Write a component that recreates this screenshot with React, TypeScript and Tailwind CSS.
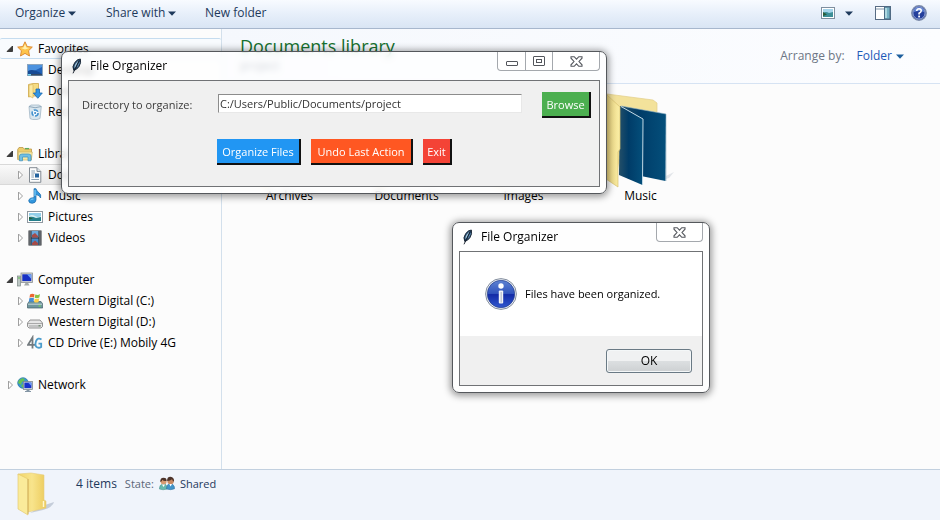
import type { ReactNode } from "react";

const Caret = ({ className }: { className: string }) => (
  <svg width="8" height="5" viewBox="0 0 8 5" className={className} aria-hidden="true">
    <path d="M0 0.5H8L4 4.8Z" fill="currentColor" />
  </svg>
);

const Expander = ({ open }: { open: boolean }) => (
  <svg width="8" height="10" viewBox="0 0 8 10" className="shrink-0" aria-hidden="true">
    {open ? (
      <path d="M6.5 2V7.5H1Z" fill="#3c3c3c" stroke="#262626" strokeWidth="0.8" />
    ) : (
      <path d="M2.5 1L6.5 5L2.5 9Z" fill="#fff" stroke="#a0a0a0" />
    )}
  </svg>
);

const Svg16 = ({ children }: { children: ReactNode }) => (
  <svg width="16" height="16" viewBox="0 0 16 16" className="shrink-0" aria-hidden="true">
    {children}
  </svg>
);

const StarIcon = () => (
  <Svg16>
    <path d="M8 .8L10.2 5.5L15.3 6.1L11.6 9.7L12.5 15L8 12.4L3.5 15L4.4 9.7L.7 6.1L5.8 5.5Z" fill="#fdc44b" stroke="#d9822b" strokeWidth="0.9" strokeLinejoin="round" />
    <path d="M8 3L9.4 6.4L12.5 7L8 8.5L4 7L6.5 6.4Z" fill="#fff0b0" />
  </Svg16>
);

const DesktopIcon = () => (
  <Svg16>
    <rect x=".5" y="2.5" width="15" height="11" fill="#2263b8" stroke="#8ba4bd" />
    <path d="M1 3H15V5L1 12Z" fill="#4c92df" />
    <path d="M1 13V9Q6 6 15 12V13Z" fill="#174b94" />
    <rect x="1" y="12" width="14" height="1.5" fill="#354b65" />
    <rect x="1" y="12" width="3" height="1.5" fill="#74d1ef" />
  </Svg16>
);

const DownloadsIcon = () => (
  <Svg16>
    <path d="M1.5 1.5L6 .5H11.5V13H6L1.5 14Z" fill="#f5dc83" stroke="#cda74a" strokeWidth="0.8" />
    <path d="M6 1.5V15L2 13V2Z" fill="#fbeaa3" stroke="#d6b458" strokeWidth="0.6" />
    <path d="M9 6H12.5V10H15.3L10.8 15.3L6.3 10H9Z" fill="#3295e4" stroke="#1a68af" strokeWidth="0.8" />
  </Svg16>
);

const RecentIcon = () => (
  <Svg16>
    <path d="M2 2.5L4 1L12 1L14.3 2.5L13 14.5L10 15.5H5.5L3 14.5Z" fill="#d9e6ee" stroke="#a3b7c6" strokeWidth="0.8" />
    <path d="M2 2.5Q8 5 14.3 2.5" fill="none" stroke="#90a8ba" />
    <circle cx="8.1" cy="9" r="3" fill="#f5fbff" stroke="#4392cf" strokeWidth="1.6" strokeDasharray="4.7 1.5" />
    <circle cx="8.1" cy="9" r="1" fill="#3b83c4" />
  </Svg16>
);

const LibrariesIcon = () => (
  <Svg16>
    <path d="M.7 3.5L2 1.5H6L7.4 3H14.5V13.5H.7Z" fill="#edcd6c" stroke="#bd9747" strokeWidth="0.8" />
    <path d="M1.2 6H15.3L14.3 14H1.5Z" fill="#faeaa5" stroke="#c9b165" strokeWidth="0.7" />
    <path d="M8 2.6H12" stroke="#5caa5c" strokeWidth="1.3" />
    <path d="M2.5 14.8V10Q2.5 8 5 8H11.5Q14 8 14 10V14.8H11V11H5.5V14.8Z" fill="#72bfe4" stroke="#398fbd" strokeWidth="0.7" />
  </Svg16>
);

const DocumentIcon = () => (
  <Svg16>
    <path d="M2.5 .7H10L13.8 4.5V15.3H2.5Z" fill="#fdfdfd" stroke="#838b93" />
    <path d="M10 .7V4.5H13.8" fill="#dce4ea" stroke="#838b93" />
    <path d="M4.3 4H8M4.3 6H8M4.3 8H7M4.3 10H7M4.3 12.5H12" stroke="#8da2b5" />
    <rect x="8" y="6.5" width="4" height="4" fill="#26649f" />
  </Svg16>
);

const MusicIcon = () => (
  <Svg16>
    <path d="M7 .7H9Q9.5 3 12 4.8Q14.5 6.5 13.6 10Q12.8 7.3 9 6.5V12Q8.8 15.1 5.2 15.3Q1.8 15.3 1.7 12.8Q2 9.7 7 9.7Z" fill="#3296dd" stroke="#1767a7" strokeWidth="0.7" />
    <path d="M8 2V8M3.5 12Q4.5 10.8 6.5 11" stroke="#8bd7ff" fill="none" />
  </Svg16>
);

const PictureIcon = () => (
  <Svg16>
    <rect x=".5" y="2.5" width="15" height="11" fill="#fff" stroke="#9098a0" />
    <rect x="2" y="4" width="12" height="8" fill="#92cee9" />
    <path d="M2 7Q5 5 8 7T14 7V12H2Z" fill="#d8edf0" />
    <path d="M2 8Q5 7 9 9L14 8V12H2Z" fill="#247f8b" />
    <path d="M2 8L6 9.5L2 10.5Z" fill="#2a5c39" />
  </Svg16>
);

const ViewIcon = () => (
  <svg width="14" height="12" viewBox="0 0 14 12" aria-hidden="true">
    <rect x=".5" y=".5" width="13" height="11" fill="#fff" stroke="#7f8f9f" />
    <rect x="2" y="2" width="10" height="8" fill="#a5d4ea" />
    <path d="M2 6Q5 4 8 6L12 5V10H2Z" fill="#3d8f97" />
    <path d="M2 5L6 7.5L2 9Z" fill="#2a5c39" />
  </svg>
);

const VideoIcon = () => (
  <Svg16>
    <rect x="1.5" y=".5" width="13" height="15" fill="#292c32" />
    <rect x="4.5" y="1" width="7" height="6.5" fill="#6ba9dc" />
    <rect x="4.5" y="8.5" width="7" height="6.5" fill="#438acb" />
    <path d="M5 5L8 3L11 6V7.5H5ZM5 13L8 10.5L11 13V15H5Z" fill="#a54b48" />
    <path d="M3 1.5V15M13 1.5V15" stroke="#e1e6e9" strokeWidth="1.2" strokeDasharray="1 1" />
  </Svg16>
);

const ComputerIcon = () => (
  <Svg16>
    <rect x=".5" y="4" width="3" height="10" fill="#bdc7c4" stroke="#7d8987" strokeWidth="0.7" />
    <rect x="1" y="5.5" width="2" height="1" fill="#58bd44" />
    <rect x="4" y="1" width="11.5" height="9.5" fill="#d8d8ce" stroke="#898f95" strokeWidth="0.8" />
    <rect x="5.3" y="2.3" width="9" height="6.8" fill="#1731c5" />
    <path d="M10 2.3H14.3V7Z" fill="#6fa2f5" />
    <path d="M8.5 11H11.2L12.5 13.5H7Z" fill="#a3aaa9" />
  </Svg16>
);

const SystemDriveIcon = () => (
  <Svg16>
    <path d="M2 8.5H14L15.7 11V15H.5V11Z" fill="#6e969d" stroke="#435f68" strokeWidth="0.7" />
    <path d="M1 11.2H15" stroke="#c6d8da" />
    <path d="M3 1.5Q5 0 7.5 1.3L7 4.5Q4.8 3.5 2.5 4.7Z" fill="#ed6831" />
    <path d="M8.3 1.5Q11 2.5 13 1L12.3 4.5Q10 5.7 7.7 4.7Z" fill="#8bc342" />
    <path d="M2.3 5.3Q5 4 7 5.3L6.5 9Q4 7.8 1.8 9Z" fill="#458fd4" />
    <path d="M7.7 5.5Q10 6.7 12.3 5.3L11.5 9Q9.5 10 7 9Z" fill="#ffd04a" />
    <rect x="11.5" y="12.5" width="2.3" height="1" fill="#72df55" />
  </Svg16>
);

const DriveIcon = () => (
  <Svg16>
    <path d="M3 6H13L15.5 9V12.5L14 14H2L.5 12.5V9Z" fill="#e6e6e6" stroke="#888" strokeWidth="0.9" />
    <path d="M1 9.5H15" stroke="#a9a9a9" />
    <path d="M2 11H14V13H2Z" fill="#c2c3c3" />
    <rect x="11.5" y="11.3" width="2" height="1" fill="#557355" />
  </Svg16>
);

const ModemIcon = () => (
  <Svg16>
    <path d="M5.5 13.5V2.5L1 9.8H8" fill="none" stroke="#737a7e" strokeWidth="1.8" />
    <path d="M14.5 4.4Q10.8 2 9 6.2Q7.4 11.2 10.4 12.5Q12.3 13.2 14.2 12V8.7H11.5" fill="none" stroke="#4d9dcc" strokeWidth="1.8" />
  </Svg16>
);

const NetworkIcon = () => (
  <Svg16>
    <circle cx="6" cy="6" r="5.3" fill="#3993d2" stroke="#2374a4" strokeWidth="0.7" />
    <path d="M2 3L6 1L8 3L5 5L4 8L1 6ZM6 7L8 8L6 11L4 9Z" fill="#66c353" />
    <rect x="6.3" y="4.5" width="9.2" height="8" fill="#cdd6d9" stroke="#727d85" strokeWidth="0.7" />
    <rect x="7.4" y="5.6" width="7" height="5.5" fill="#1731cb" />
    <path d="M11 5.6H14.4V9Z" fill="#6c9ef6" />
    <path d="M9.5 12.5H12.5V14H14V15H8V14H9.5Z" fill="#8395a4" />
  </Svg16>
);

const SharedIcon = () => (
  <Svg16>
    <path d="M.4 13Q.2 8.5 4 8H6Q8 9 8.2 13Q4 14.5 .4 13Z" fill="#67b9ae" stroke="#458d87" strokeWidth="0.5" />
    <path d="M7.5 13Q7.5 8.5 10 8H13Q15.8 9.5 15.6 12.7Q11.8 14.5 7.5 13Z" fill="#4295ca" stroke="#2e6d9b" strokeWidth="0.5" />
    <circle cx="4.6" cy="5.5" r="3" fill="#d69a70" />
    <circle cx="11.6" cy="5" r="3.2" fill="#c78962" />
    <path d="M1.3 6Q1 1.8 4.5 1.7Q8 1.8 7.5 5Q4.4 5.4 3.4 3.8Q3 5.8 1.3 6ZM8.2 5Q7.8 .8 11.5 .7Q15.4 1 15 5.8Q13.5 5 13 3.2Q11.5 4.6 8.2 5Z" fill="#4c332a" />
    <path d="M3 8.5L4.5 11L6 8.5ZM10.3 8L11.6 10.5L13 8Z" fill="#fff" />
  </Svg16>
);

const PreviewPaneIcon = () => (
  <svg width="16" height="14" viewBox="0 0 16 14" aria-hidden="true">
    <rect x=".5" y=".5" width="15" height="13" fill="#fff" stroke="#576b83" />
    <path d="M1 3H15" stroke="#8096a9" />
    <rect x="9.5" y="1" width="5.5" height="12" fill="#78b3c5" stroke="#496b84" />
    <path d="M11 2V12" stroke="#c0e5e9" strokeWidth="1.5" />
  </svg>
);

const HelpIcon = () => (
  <Svg16>
    <circle cx="8" cy="8" r="7.3" fill="#253f9c" stroke="#7d8caa" strokeWidth="1.2" />
    <circle cx="8" cy="8" r="6.1" fill="none" stroke="#c5d4ee" strokeWidth="0.7" />
    <path d="M3 7Q3 2.5 8 2.5T13 7Q8 5 3 7Z" fill="#6387d6" />
    <path d="M5.7 6Q5.9 3.8 8.1 3.8Q10.4 3.9 10.2 6Q10.1 7.2 8.1 8.3V9.6" fill="none" stroke="#fff" strokeWidth="1.6" />
    <rect x="7.2" y="10.6" width="1.8" height="1.8" fill="#fff" />
  </Svg16>
);

const FeatherIcon = () => (
  <Svg16>
    <path d="M5.8 12.4Q3.6 9 6.8 4.4Q9.4 1 12.4 1Q13.4 4.5 11 8.6Q8.8 11.8 5.8 12.4Z" fill="#27496b" stroke="#14202f" strokeWidth="0.9" />
    <path d="M6.4 9.8Q6.2 6 10.8 2.2Q9.4 6 7.2 9.8Z" fill="#a5c8de" />
    <path d="M9.3 8.8L11.6 4.4" stroke="#6f9cc0" strokeWidth="0.8" />
    <path d="M11.2 2.4L5 15.3" stroke="#0d1622" strokeWidth="0.9" />
  </Svg16>
);

const InfoIcon = () => (
  <svg width="32" height="32" viewBox="0 0 32 32" className="shrink-0" aria-hidden="true">
    <defs>
      <linearGradient id="info-blue" x1="0" y1="0" x2="0" y2="1">
        <stop offset="0" stopColor="#5e83d2" />
        <stop offset="0.48" stopColor="#3154bd" />
        <stop offset="0.52" stopColor="#132ba7" />
        <stop offset="1" stopColor="#3158cf" />
      </linearGradient>
    </defs>
    <circle cx="16" cy="16" r="15.4" fill="#eef2f6" stroke="#848e9e" />
    <circle cx="16" cy="16" r="13.7" fill="url(#info-blue)" stroke="#263f8d" strokeWidth="0.7" />
    <circle cx="16" cy="8" r="2.7" fill="#fff" />
    <rect x="13.8" y="12.5" width="4.4" height="13" rx="1" fill="#f3f4f8" />
    <path d="M16.2 14V24.5" stroke="#b9bfd0" strokeWidth="1.3" />
  </svg>
);

const FolderIcon = ({ filled }: { filled: boolean }) => (
  <svg width="96" height="96" viewBox="0 0 96 96" aria-hidden="true">
    <defs>
      <linearGradient id="folder-front" x1="0" x2="1">
        <stop offset="0" stopColor="#ecd47c" />
        <stop offset="1" stopColor="#faeea6" />
      </linearGradient>
      <linearGradient id="folder-sheet" x1="0" x2="1">
        <stop offset="0" stopColor="#244f68" />
        <stop offset="0.4" stopColor="#003c68" />
        <stop offset="1" stopColor="#044f7b" />
      </linearGradient>
    </defs>
    <path d="M14 2L60 8L64 11V40L27 80Z" fill="#f3e29b" stroke="#e2cf8a" strokeWidth="0.7" />
    {filled && (
      <>
        <path d="M73 84L81 80L76 86L66 89Z" fill="#c9d0d8" opacity="0.5" />
        <path d="M28 14L73 22L72.500 89L48 84Z" fill="url(#folder-sheet)" />
        <path d="M28 14L73 22V89" fill="none" stroke="#8fb0c4" strokeWidth="0.6" />
        <path d="M27 14L50 27L49.500 93L26 83Z" fill="url(#folder-sheet)" />
        <path d="M28 14.500L50 27L49.500 93" fill="none" stroke="#c4dae6" />
      </>
    )}
    <path d="M13 2L27 15V57L25 60V95L13 87Z" fill="url(#folder-front)" stroke="#d9c170" strokeWidth="0.7" />
  </svg>
);

const StatusFolder = () => (
  <svg width="42" height="46" viewBox="0 0 42 46" className="shrink-0" aria-hidden="true">
    <defs>
      <linearGradient id="status-folder" x1="0" x2="1">
        <stop offset="0" stopColor="#f1d568" />
        <stop offset="0.5" stopColor="#f8e48c" />
        <stop offset="1" stopColor="#eccb5c" />
      </linearGradient>
    </defs>
    <path d="M26 36L38 32Q37 37 27 40L14 43Z" fill="#aeb8c8" opacity="0.65" />
    <path d="M2 4L15 3L28 5V30L30 31V38L12 42Z" fill="url(#status-folder)" stroke="#e6cd80" strokeWidth="0.6" />
    <path d="M2 4L12 9V45L2 39Z" fill="#faeb9a" stroke="#e2c564" strokeWidth="0.6" />
    <path d="M12 9V44" stroke="#c49f4b" strokeWidth="0.7" />
    <path d="M27.5 31V37" stroke="#fff7ce" strokeWidth="1.5" />
  </svg>
);

const CloseGlyph = () => (
  <svg width="13" height="11" viewBox="0 0 13 11" aria-hidden="true">
    <path d="M1 .7H4.2L6.5 3.2L8.8 .7H12V2.2L9 5.5L12 8.8V10.3H8.8L6.5 7.8L4.2 10.3H1V8.8L4 5.5L1 2.2Z" fill="#fff" stroke="#53565c" strokeWidth="1.1" />
  </svg>
);

type TreeRow = { label: string; icon: ReactNode; level: 0 | 1; expander?: "open" | "closed"; look?: "hover" | "selected" };

const groups: TreeRow[][] = [
  [
    { label: "Favorites", icon: <StarIcon />, level: 0, expander: "open", look: "hover" },
    { label: "Desktop", icon: <DesktopIcon />, level: 1 },
    { label: "Downloads", icon: <DownloadsIcon />, level: 1 },
    { label: "Recent Places", icon: <RecentIcon />, level: 1 },
  ],
  [
    { label: "Libraries", icon: <LibrariesIcon />, level: 0, expander: "open" },
    { label: "Documents", icon: <DocumentIcon />, level: 1, expander: "closed", look: "selected" },
    { label: "Music", icon: <MusicIcon />, level: 1, expander: "closed" },
    { label: "Pictures", icon: <PictureIcon />, level: 1, expander: "closed" },
    { label: "Videos", icon: <VideoIcon />, level: 1, expander: "closed" },
  ],
  [
    { label: "Computer", icon: <ComputerIcon />, level: 0, expander: "open" },
    { label: "Western Digital (C:)", icon: <SystemDriveIcon />, level: 1, expander: "closed" },
    { label: "Western Digital (D:)", icon: <DriveIcon />, level: 1, expander: "closed" },
    { label: "CD Drive (E:) Mobily 4G", icon: <ModemIcon />, level: 1, expander: "closed" },
  ],
  [{ label: "Network", icon: <NetworkIcon />, level: 0, expander: "closed" }],
];

const rowLook = {
  hover: "rounded-[2px] border-[#c5dcef] bg-[#f8fbfe]",
  selected: "border-[#d9d9d9] bg-linear-to-b from-[#fafafa] to-[#e7e7e7]",
  plain: "border-transparent",
};

function Tree() {
  return (
    <nav aria-label="Folders" className="flex w-[222px] shrink-0 flex-col gap-[21px] border-r border-[#d3e0ec] bg-[#fcfcfc] pt-[9px]">
      {groups.map((rows) => (
        <ul key={rows[0].label}>
          {rows.map((row) => (
            <li key={row.label}>
              <button
                type="button"
                className={`flex h-[21px] w-full items-center border-y text-left whitespace-nowrap ${row.level ? "pl-4" : "pl-[6px]"} ${rowLook[row.look ?? "plain"]}`}
              >
                <span className="flex w-[11px] shrink-0">{row.expander && <Expander open={row.expander === "open"} />}</span>
                {row.icon}
                <span className="pl-[5px]">{row.label}</span>
              </button>
            </li>
          ))}
        </ul>
      ))}
    </nav>
  );
}

function AppWindow({ title, className, controls, children }: { title: string; className: string; controls: ReactNode; children: ReactNode }) {
  return (
    <section
      aria-label={title}
      className={`absolute rounded-[7px] border border-[#55585c] bg-white/75 px-[6px] pb-[6px] shadow-[0_1px_7px_2px_rgba(0,0,0,0.38)] backdrop-blur-[3px] ${className}`}
    >
      <header className="flex h-7 items-start justify-between">
        <div className="flex h-7 items-center gap-[6px]">
          <FeatherIcon />
          <h2>{title}</h2>
        </div>
        <div className="flex h-[19px] divide-x divide-[#a4a8ad] rounded-b-[4px] border border-t-0 border-[#a4a8ad] bg-white/70">{controls}</div>
      </header>
      <div className="border border-[#707275] bg-[#f0f0f0]">{children}</div>
    </section>
  );
}

const raisedButton = "h-[26px] border-r-2 border-b-2 border-[#111] pt-px text-center text-[11px] whitespace-nowrap text-white";

export default function App() {
  return (
    <div className="relative flex min-h-screen flex-col overflow-hidden bg-[#fcfcfc] font-['Open_Sans','Noto_Sans',sans-serif] text-[12px] leading-4 text-black">
      <header className="flex h-[29px] items-center border-b border-[#a7b7cd] bg-linear-to-b from-[#f8fbff] via-[#e7effa] to-[#d9e5f4] pr-[13px] pb-[2px] pl-[15px] text-[#1e395b]">
        <button type="button" className="flex w-[91px] items-center gap-[3px]">Organize <Caret className="text-[#1e395b]" /></button>
        <button type="button" className="flex w-[99px] items-center gap-[3px] whitespace-nowrap">Share with <Caret className="text-[#1e395b]" /></button>
        <button type="button">New folder</button>
        <div className="ml-auto flex items-center">
          <button type="button" aria-label="Change view" className="mr-[22px] flex items-center gap-[10px]">
            <ViewIcon />
            <Caret className="text-[#1e395b]" />
          </button>
          <button type="button" aria-label="Preview pane" className="mr-5"><PreviewPaneIcon /></button>
          <button type="button" aria-label="Help"><HelpIcon /></button>
        </div>
      </header>

      <div className="flex grow">
        <Tree />
        <main className="min-w-0 grow">
          <div className="flex h-[55px] items-start justify-between border-b border-[#d6e3f3] bg-linear-to-r from-[#f5f8fd] to-[#fcfdff] pr-9 pl-[18px]">
            <div>
              <h1 className="pt-[5px] text-[18px] leading-6 text-[#15702f]">Documents library</h1>
              <p className="text-[#44546a]">project</p>
            </div>
            <div className="flex items-center gap-3 pt-[19px] text-[#6d7685]">
              <span>Arrange by:</span>
              <button type="button" className="flex items-center gap-1 text-[#1c59b8]">Folder <Caret className="text-[#1d5f9d]" /></button>
            </div>
          </div>
          <ul className="flex pt-2 pl-[9px]">
            {["Archives", "Documents", "Images", "Music"].map((name) => (
              <li key={name} className="flex w-[117px] flex-col items-center">
                <FolderIcon filled={name === "Music"} />
                <span>{name}</span>
              </li>
            ))}
          </ul>
        </main>
      </div>

      <footer className="flex h-[51px] items-start border-t border-[#c2d0df] bg-[#f0f4fb] pl-4 text-[#1e395b]">
        <StatusFolder />
        <p className="flex items-center pt-[6px] pl-[18px] text-[11px]">
          <span className="text-[12px]">4 items</span>
          <span className="pr-[5px] pl-2 text-[#5a6779]">State:</span>
          <SharedIcon />
          <span className="pl-[5px]">Shared</span>
        </p>
      </footer>

      <AppWindow
        title="File Organizer"
        className="top-[51px] left-[61px] w-[546px]"
        controls={
          <>
            <button type="button" aria-label="Minimize" className="flex w-7 items-center justify-center pt-1">
              <svg width="12" height="5" viewBox="0 0 12 5" aria-hidden="true"><rect x=".5" y=".5" width="11" height="4" rx=".5" fill="#fff" stroke="#53565c" /></svg>
            </button>
            <button type="button" aria-label="Maximize" className="flex w-[27px] items-center justify-center">
              <svg width="12" height="10" viewBox="0 0 12 10" aria-hidden="true">
                <rect x=".5" y=".5" width="11" height="9" rx=".5" fill="#fff" stroke="#53565c" />
                <rect x="3.5" y="3.5" width="5" height="3" fill="#fff" stroke="#53565c" />
              </svg>
            </button>
            <button type="button" aria-label="Close" className="flex w-[46px] items-center justify-center"><CloseGlyph /></button>
          </>
        }
      >
        <form className="flex flex-col gap-[21px] pt-[11px] pr-2 pb-[21px] pl-[13px] text-[11px]" onSubmit={(e) => e.preventDefault()}>
          <div className="flex items-center">
            <label htmlFor="directory" className="w-[136px] shrink-0 text-[#3c3c3c]">Directory to organize:</label>
            <input
              id="directory"
              type="text"
              defaultValue="C:/Users/Public/Documents/project"
              className="mr-5 mb-1 h-[19px] min-w-0 grow border border-t-[#8c8c8c] border-r-[#e8e8e8] border-b-[#e8e8e8] border-l-[#8c8c8c] bg-white px-px text-[#333] outline-none"
            />
            <button type="button" className={`${raisedButton} w-[49px] bg-[#4caf50]`}>Browse</button>
          </div>
          <div className="flex gap-[10px] pl-[135px]">
            <button type="button" className={`${raisedButton} w-[84px] bg-[#2196f3]`}>Organize Files</button>
            <button type="button" className={`${raisedButton} w-[102px] bg-[#ff5722]`}>Undo Last Action</button>
            <button type="button" className={`${raisedButton} w-[29px] bg-[#f44336]`}>Exit</button>
          </div>
        </form>
      </AppWindow>

      <AppWindow
        title="File Organizer"
        className="top-[222px] left-[452px] w-[258px]"
        controls={<button type="button" aria-label="Close" className="flex w-[45px] items-center justify-center"><CloseGlyph /></button>}
      >
        <div className="flex h-[84px] items-center gap-2 bg-white pl-[25px] text-[11px]">
          <InfoIcon />
          <p>Files have been organized.</p>
        </div>
        <div className="flex h-[49px] items-center justify-end pr-[10px]">
          <button type="button" className="h-[24px] w-[86px] rounded-[3px] border border-[#6a7a85] bg-linear-to-b from-[#f0f1f2] from-50% via-[#dcdfe1] via-50% to-[#cdd0d2] shadow-[inset_0_0_0_1px_#f4f7f8]">OK</button>
        </div>
      </AppWindow>
    </div>
  );
}
